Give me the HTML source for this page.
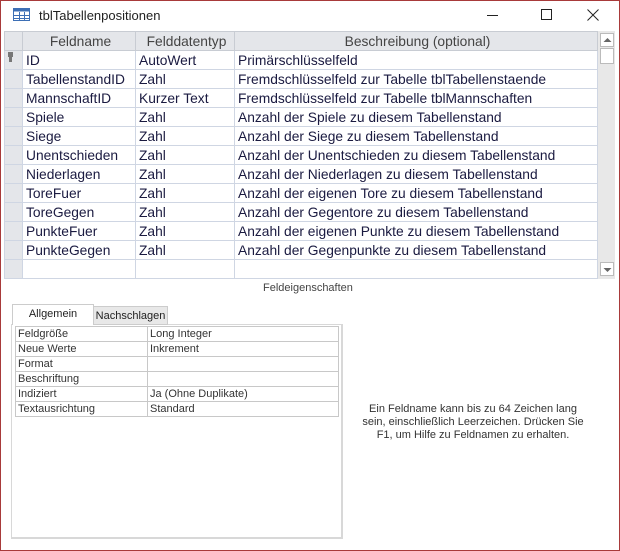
<!DOCTYPE html>
<html><head><meta charset="utf-8"><style>
*{margin:0;padding:0;box-sizing:border-box}
body{width:620px;height:551px;overflow:hidden;background:#fff;font-family:"Liberation Sans",sans-serif;position:relative}
.win{position:absolute;left:0;top:0;width:620px;height:551px;border:1px solid #a83a3a}
.abs{position:absolute}
table.g{position:absolute;left:4px;top:31px;border-collapse:collapse;font-size:13.8px;color:#1a1a40;table-layout:fixed}
table.g td{height:19px;line-height:17px;border:1px solid #cfd6e3;padding:0 0 0 3px;white-space:nowrap;overflow:hidden}
table.g td.s{background:#e4e6ea;width:18px;padding:0;vertical-align:top}
table.g tr.h td{background:#e4e6ea;color:#444;text-align:center;border-color:#c8ccd3}
table.p{position:absolute;left:15px;top:326px;border-collapse:collapse;font-size:11px;color:#333}
table.p td{height:15px;border:1px solid #c8c8c8;padding:0 0 0 2px;white-space:nowrap}
</style></head><body>
<div class="win"></div>
<svg class="abs" style="left:13px;top:8px" width="17" height="13"><rect x="0.5" y="0.5" width="16" height="12" fill="#fff" stroke="#3d6fb5"/><rect x="0.5" y="0.5" width="16" height="3" fill="#3d6fb5"/><path d="M1 7.5H16M1 10.5H16M6.5 4V12M11.5 4V12" stroke="#3d6fb5"/></svg>
<div class="abs" style="left:39px;top:8px;font-size:13px;color:#222">tblTabellenpositionen</div>
<div class="abs" style="left:487px;top:15px;width:11px;height:1px;background:#222"></div>
<div class="abs" style="left:541px;top:9px;width:11px;height:11px;border:1px solid #222"></div>
<svg class="abs" style="left:587px;top:9px" width="12" height="12"><path d="M0.5 0.5L11.5 11.5M11.5 0.5L0.5 11.5" stroke="#222"/></svg>
<table class="g">
<tr class="h"><td class="s"></td><td style="width:113px">Feldname</td><td style="width:99px">Felddatentyp</td><td style="width:363px">Beschreibung (optional)</td></tr>
<tr><td class="s" style="position:relative"><svg style="position:absolute;left:2px;top:1px" width="8" height="12"><path d="M1 0h5v5h-1v5h-3v-5h-1z" fill="#777"/></svg></td><td>ID</td><td>AutoWert</td><td>Primärschlüsselfeld</td></tr>
<tr><td class="s"></td><td>TabellenstandID</td><td>Zahl</td><td>Fremdschlüsselfeld zur Tabelle tblTabellenstaende</td></tr>
<tr><td class="s"></td><td>MannschaftID</td><td>Kurzer Text</td><td>Fremdschlüsselfeld zur Tabelle tblMannschaften</td></tr>
<tr><td class="s"></td><td>Spiele</td><td>Zahl</td><td>Anzahl der Spiele zu diesem Tabellenstand</td></tr>
<tr><td class="s"></td><td>Siege</td><td>Zahl</td><td>Anzahl der Siege zu diesem Tabellenstand</td></tr>
<tr><td class="s"></td><td>Unentschieden</td><td>Zahl</td><td>Anzahl der Unentschieden zu diesem Tabellenstand</td></tr>
<tr><td class="s"></td><td>Niederlagen</td><td>Zahl</td><td>Anzahl der Niederlagen zu diesem Tabellenstand</td></tr>
<tr><td class="s"></td><td>ToreFuer</td><td>Zahl</td><td>Anzahl der eigenen Tore zu diesem Tabellenstand</td></tr>
<tr><td class="s"></td><td>ToreGegen</td><td>Zahl</td><td>Anzahl der Gegentore zu diesem Tabellenstand</td></tr>
<tr><td class="s"></td><td>PunkteFuer</td><td>Zahl</td><td>Anzahl der eigenen Punkte zu diesem Tabellenstand</td></tr>
<tr><td class="s"></td><td>PunkteGegen</td><td>Zahl</td><td>Anzahl der Gegenpunkte zu diesem Tabellenstand</td></tr>
<tr><td class="s"></td><td></td><td></td><td></td></tr>
</table>
<div class="abs" style="left:598px;top:31px;width:17px;height:248px;background:#e8e8e8"></div>
<div class="abs" style="left:600px;top:33px;width:14px;height:14px;background:#fff;border:1px solid #bbb"></div>
<svg class="abs" style="left:603px;top:37px" width="9" height="6"><path d="M0.5 5L4.5 1L8.5 5Z" fill="#666"/></svg>
<div class="abs" style="left:600px;top:48px;width:14px;height:16px;background:#fff;border:1px solid #bbb"></div>
<div class="abs" style="left:600px;top:262px;width:14px;height:14px;background:#fff;border:1px solid #bbb"></div>
<svg class="abs" style="left:603px;top:267px" width="9" height="6"><path d="M0.5 1L4.5 5L8.5 1Z" fill="#666"/></svg>
<div class="abs" style="left:263px;top:282px;font-size:11px;color:#444">Feldeigenschaften</div>
<div class="abs" style="left:11px;top:324px;width:332px;height:215px;border:1px solid #d8d8d8;border-right-width:2px;border-bottom-width:2px"></div>
<div class="abs" style="left:93px;top:306px;width:75px;height:19px;background:#e8e8e8;border:1px solid #ccc;font-size:11px;color:#222;text-align:center;line-height:18px">Nachschlagen</div>
<div class="abs" style="left:12px;top:304px;width:82px;height:21px;background:#fff;border:1px solid #ccc;border-bottom:none;font-size:11px;color:#222;text-align:center;line-height:18px">Allgemein</div>
<table class="p">
<tr><td style="width:132px">Feldgröße</td><td style="width:191px">Long Integer</td></tr>
<tr><td>Neue Werte</td><td>Inkrement</td></tr>
<tr><td>Format</td><td></td></tr>
<tr><td>Beschriftung</td><td></td></tr>
<tr><td>Indiziert</td><td>Ja (Ohne Duplikate)</td></tr>
<tr><td>Textausrichtung</td><td>Standard</td></tr>
</table>
<div class="abs" style="left:358px;top:403px;width:230px;font-size:11px;line-height:13px;color:#333;text-align:center">Ein Feldname kann bis zu 64 Zeichen lang sein, einschließlich Leerzeichen. Drücken Sie F1, um Hilfe zu Feldnamen zu erhalten.</div>
</body></html>
